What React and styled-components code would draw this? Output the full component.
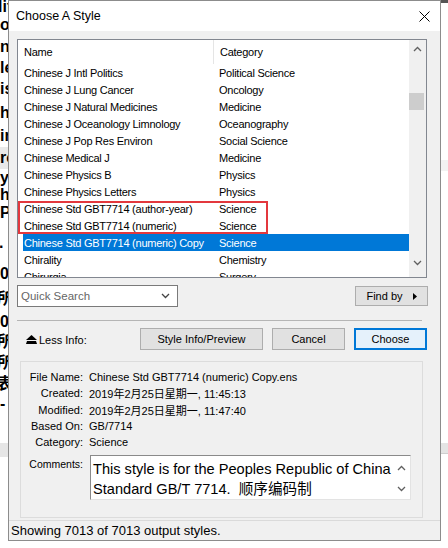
import React from "react";
import styled, { createGlobalStyle } from "styled-components";

const GlobalStyle = createGlobalStyle`
  html, body {
    margin: 0;
    padding: 0;
    background: #ffffff;
    font-family: "Liberation Sans", Arial, sans-serif;
  }
`;

const Page = styled.div`
  display: flex;
  width: 448px;
  height: 548px;
  overflow: hidden;
`;

const BackStrip = styled.div`
  width: ${(p) => p.$w}px;
  flex-shrink: 0;
  overflow: hidden;
  display: flex;
  flex-direction: column;
`;

const BackLine = styled.div`
  height: ${(p) => p.$h}px;
  flex-shrink: 0;
  font: bold 16px "Liberation Sans", "Noto Sans CJK SC", sans-serif;
  line-height: ${(p) => p.$h}px;
  color: #000;
  white-space: nowrap;
  margin-left: ${(p) => p.$x || 0}px;
  background: ${(p) => p.$bg || "transparent"};
  border-bottom: ${(p) => (p.$line ? "1px solid #cfcfcf" : "none")};
`;

const Window = styled.div`
  width: 431px;
  height: 539px;
  flex-shrink: 0;
  border: 1px solid #8c8c8c;
  background: #f0f0f0;
  display: flex;
  flex-direction: column;
`;

const TitleBar = styled.div`
  height: 30px;
  background: #ffffff;
  display: flex;
  align-items: center;
  justify-content: space-between;
  padding: 0 10px 0 7px;
  font-size: 12.5px;
  color: #000;
`;

const Body = styled.div`
  padding: 8px 13px 0 8px;
  display: flex;
  flex-direction: column;
`;

const ListBox = styled.div`
  position: relative;
  height: 237px;
  border: 1px solid #828790;
  background: #ffffff;
  display: flex;
`;

const ListContent = styled.div`
  flex: 1;
  overflow: hidden;
  font-size: 11px;
  letter-spacing: -0.25px;
  color: #000;
`;

const Header = styled.div`
  height: 24px;
  display: flex;
  align-items: center;
`;

const HeadCell = styled.div`
  width: ${(p) => (p.$w ? `${p.$w}px` : "auto")};
  flex: ${(p) => (p.$w ? "none" : 1)};
  height: 100%;
  display: flex;
  align-items: center;
  padding-left: 6px;
  box-sizing: border-box;
  border-right: ${(p) => (p.$w ? "1px solid #e5e5e5" : "none")};
`;

const Row = styled.div`
  height: 17px;
  margin-left: 5px;
  display: flex;
  align-items: center;
  white-space: nowrap;
  background: ${(p) => (p.$selected ? "#0078d7" : "transparent")};
  color: ${(p) => (p.$selected ? "#ffffff" : "#000000")};
`;

const NameCell = styled.div`
  width: 190px;
  padding-left: 1px;
  box-sizing: border-box;
  overflow: hidden;
`;

const CatCell = styled.div`
  padding-left: 6px;
`;

const VScroll = styled.div`
  width: 17px;
  flex-shrink: 0;
  background: #f0f0f0;
  display: flex;
  flex-direction: column;
  align-items: center;
`;

const ArrowBox = styled.div`
  height: 17px;
  width: 17px;
  display: flex;
  align-items: center;
  justify-content: center;
  margin-top: ${(p) => p.$mt || 0}px;
`;

const Thumb = styled.div`
  width: 15px;
  height: 17px;
  margin: 36px 2px 0 0;
  background: #cdcdcd;
`;

const Mark = styled.div`
  position: absolute;
  left: 0;
  top: 161px;
  width: 250px;
  height: 33px;
  border: 2px solid #e3383d;
  box-sizing: border-box;
  pointer-events: none;
`;

const SearchRow = styled.div`
  margin-top: 7px;
  display: flex;
  align-items: center;
  justify-content: space-between;
`;

const Combo = styled.div`
  width: 161px;
  height: 22px;
  box-sizing: border-box;
  border: 1px solid #7a7a7a;
  background: #ffffff;
  display: flex;
  align-items: center;
  justify-content: space-between;
  padding: 0 7px 0 3px;
  font-size: 11.5px;
  color: #666666;
`;

const Button = styled.div`
  width: ${(p) => p.$w}px;
  height: ${(p) => p.$h || 22}px;
  box-sizing: border-box;
  border: ${(p) => (p.$default ? "2px solid #0078d7" : "1px solid #adadad")};
  background: ${(p) => (p.$default ? "#e5f1fb" : "#e1e1e1")};
  display: flex;
  align-items: center;
  justify-content: center;
  gap: 10px;
  font-size: 11px;
  color: #000;
  margin-right: ${(p) => p.$mr || 0}px;
`;

const Separator = styled.div`
  margin: 13px 5px 0 0;
  height: 1px;
  background: #b5b5b5;
`;

const ButtonRow = styled.div`
  margin-top: 7px;
  display: flex;
  align-items: center;
  gap: 9px;
`;

const LessInfo = styled.div`
  flex: 1;
  display: flex;
  align-items: center;
  gap: 2px;
  padding: 2px 0 0 9px;
  font-size: 11px;
  color: #000;
`;

const InfoBox = styled.div`
  margin: 11px 4px 0 3px;
  height: 148px;
  border: 1px solid #dcdcdc;
  padding-top: 7px;
  box-sizing: content-box;
  font-size: 11px;
  color: #000;
`;

const InfoRow = styled.div`
  display: grid;
  grid-template-columns: 62px 1fr;
  column-gap: 6px;
  height: 16.25px;
  align-items: center;
  white-space: nowrap;
`;

const Label = styled.div`
  text-align: right;
  font-size: ${(p) => p.$size || 11}px;
  padding-top: ${(p) => p.$pt || 0}px;
`;

const Value = styled.div`
  font-family: "Liberation Sans", "Noto Sans CJK SC", sans-serif;
`;

const CommentRow = styled.div`
  margin-top: 5px;
  display: grid;
  grid-template-columns: 62px 321px;
  column-gap: 7px;
  align-items: start;
`;

const CommentBox = styled.div`
  height: 45px;
  box-sizing: border-box;
  border-top: 1px solid #8a8a8a;
  border-left: 1px solid #8a8a8a;
  border-right: 1px solid #e3e3e3;
  border-bottom: 1px solid #e3e3e3;
  background: #ffffff;
  display: flex;
`;

const CommentText = styled.div`
  flex: 1;
  padding: 3px 0 0 2px;
  font-family: "Liberation Sans", "Noto Sans CJK SC", sans-serif;
  font-size: 14.6px;
  line-height: 20px;
  color: #000;
  white-space: nowrap;
  overflow: hidden;
`;

const CommentScroll = styled.div`
  width: 17px;
  display: flex;
  flex-direction: column;
  justify-content: space-between;
  padding: 3px 0 2px;
`;

const StatusBar = styled.div`
  margin-top: auto;
  height: 19px;
  border-top: 1px solid #dadada;
  display: flex;
  align-items: center;
  padding-left: 2px;
  font-size: 13px;
  color: #000;
`;

const Chevron = ({ up, color = "#606060" }) => (
  <svg width="9" height="6" viewBox="0 0 9 6">
    <path
      d={up ? "M1 5 L4.5 1.5 L8 5" : "M1 1 L4.5 4.5 L8 1"}
      fill="none"
      stroke={color}
      strokeWidth="1.3"
    />
  </svg>
);

const CloseIcon = () => (
  <svg width="11" height="11" viewBox="0 0 11 11">
    <path d="M0.5 0.5 L10.5 10.5 M10.5 0.5 L0.5 10.5" stroke="#000" strokeWidth="1" />
  </svg>
);

const EjectIcon = () => (
  <svg width="11" height="10" viewBox="0 0 11 10">
    <polygon points="0,5 5.5,0 11,5" fill="#000" />
    <polygon points="1,6 10,6 11,9 0,9" fill="#000" />
  </svg>
);

const PlayIcon = () => (
  <svg width="4" height="7" viewBox="0 0 4 7">
    <polygon points="0,0 4,3.5 0,7" fill="#000" />
  </svg>
);

const styles = [
  ["Chinese J Intl Politics", "Political Science"],
  ["Chinese J Lung Cancer", "Oncology"],
  ["Chinese J Natural Medicines", "Medicine"],
  ["Chinese J Oceanology Limnology", "Oceanography"],
  ["Chinese J Pop Res Environ", "Social Science"],
  ["Chinese Medical J", "Medicine"],
  ["Chinese Physics B", "Physics"],
  ["Chinese Physics Letters", "Physics"],
  ["Chinese Std GBT7714 (author-year)", "Science"],
  ["Chinese Std GBT7714 (numeric)", "Science"],
  ["Chinese Std GBT7714 (numeric) Copy", "Science"],
  ["Chirality", "Chemistry"],
  ["Chirurgia", "Surgery"],
];

const selectedIndex = 10;

const info = [
  ["File Name:", "Chinese Std GBT7714 (numeric) Copy.ens"],
  ["Created:", "2019年2月25日星期一, 11:45:13"],
  ["Modified:", "2019年2月25日星期一, 11:47:40"],
  ["Based On:", "GB/7714"],
  ["Category:", "Science"],
];

// fragments of the page behind the dialog
const leftLines = [
  { t: "lit", h: 14, x: -2 },
  { t: "on", h: 22 },
  { t: "nt", h: 22 },
  { t: "le", h: 20 },
  { t: "is", h: 22 },
  { t: "h", h: 25 },
  { t: "ir", h: 22 },
  { t: "ro", h: 22, bg: "#e9e9e9" },
  { t: "y", h: 18 },
  { t: "h", h: 15 },
  { t: "P", h: 22 },
  { t: ". i", h: 38, x: -1 },
  { t: "0", h: 24 },
  { t: "所", h: 25, x: -3 },
  { t: "0", h: 21 },
  { t: "所", h: 20, x: -3 },
  { t: "所", h: 21, x: -3 },
  { t: "表", h: 22, x: -3 },
  { t: "-", h: 18 },
  { t: "", h: 30 },
  { t: "", h: 14, bg: "#e6e6e6" },
];

const rightLines = [
  { h: 3, bg: "#555" },
  { h: 157 },
  { h: 11, bg: "#f2f2f2" },
  { h: 272 },
  { h: 10, bg: "#e4e4e4", line: true },
];

export default function App() {
  return (
    <>
      <GlobalStyle />
      <Page>
        <BackStrip $w={8}>
          {leftLines.map((l, i) => (
            <BackLine key={i} $h={l.h} $x={l.x} $bg={l.bg}>
              {l.t}
            </BackLine>
          ))}
        </BackStrip>
        <Window>
          <TitleBar>
            <span>Choose A Style</span>
            <CloseIcon />
          </TitleBar>
          <Body>
            <ListBox>
              <ListContent>
                <Header>
                  <HeadCell $w={196}>Name</HeadCell>
                  <HeadCell>Category</HeadCell>
                </Header>
                {styles.map(([name, cat], i) => (
                  <Row key={name} $selected={i === selectedIndex}>
                    <NameCell>{name}</NameCell>
                    <CatCell>{cat}</CatCell>
                  </Row>
                ))}
              </ListContent>
              <VScroll>
                <ArrowBox>
                  <Chevron up />
                </ArrowBox>
                <Thumb />
                <ArrowBox $mt={144}>
                  <Chevron />
                </ArrowBox>
              </VScroll>
              <Mark />
            </ListBox>
            <SearchRow>
              <Combo>
                <span>Quick Search</span>
                <Chevron color="#444" />
              </Combo>
              <Button $w={73} $h={20} $mr={-1}>
                <span>Find by</span>
                <PlayIcon />
              </Button>
            </SearchRow>
            <Separator />
            <ButtonRow>
              <LessInfo>
                <EjectIcon />
                <span>Less Info:</span>
              </LessInfo>
              <Button $w={123}>Style Info/Preview</Button>
              <Button $w={73}>Cancel</Button>
              <Button $w={73} $default>
                Choose
              </Button>
            </ButtonRow>
            <InfoBox>
              {info.map(([k, v]) => (
                <InfoRow key={k}>
                  <Label>{k}</Label>
                  <Value>{v}</Value>
                </InfoRow>
              ))}
              <CommentRow>
                <Label $size={10.5} $pt={3}>
                  Comments:
                </Label>
                <CommentBox>
                  <CommentText>
                    This style is for the Peoples Republic of China
                    <br />
                    Standard GB/T 7714.&nbsp; 顺序编码制
                  </CommentText>
                  <CommentScroll>
                    <ArrowBox>
                      <Chevron up />
                    </ArrowBox>
                    <ArrowBox>
                      <Chevron />
                    </ArrowBox>
                  </CommentScroll>
                </CommentBox>
              </CommentRow>
            </InfoBox>
          </Body>
          <StatusBar>Showing 7013 of 7013 output styles.</StatusBar>
        </Window>
        <BackStrip $w={7}>
          {rightLines.map((l, i) => (
            <BackLine key={i} $h={l.h} $bg={l.bg} $line={l.line} />
          ))}
        </BackStrip>
      </Page>
    </>
  );
}
